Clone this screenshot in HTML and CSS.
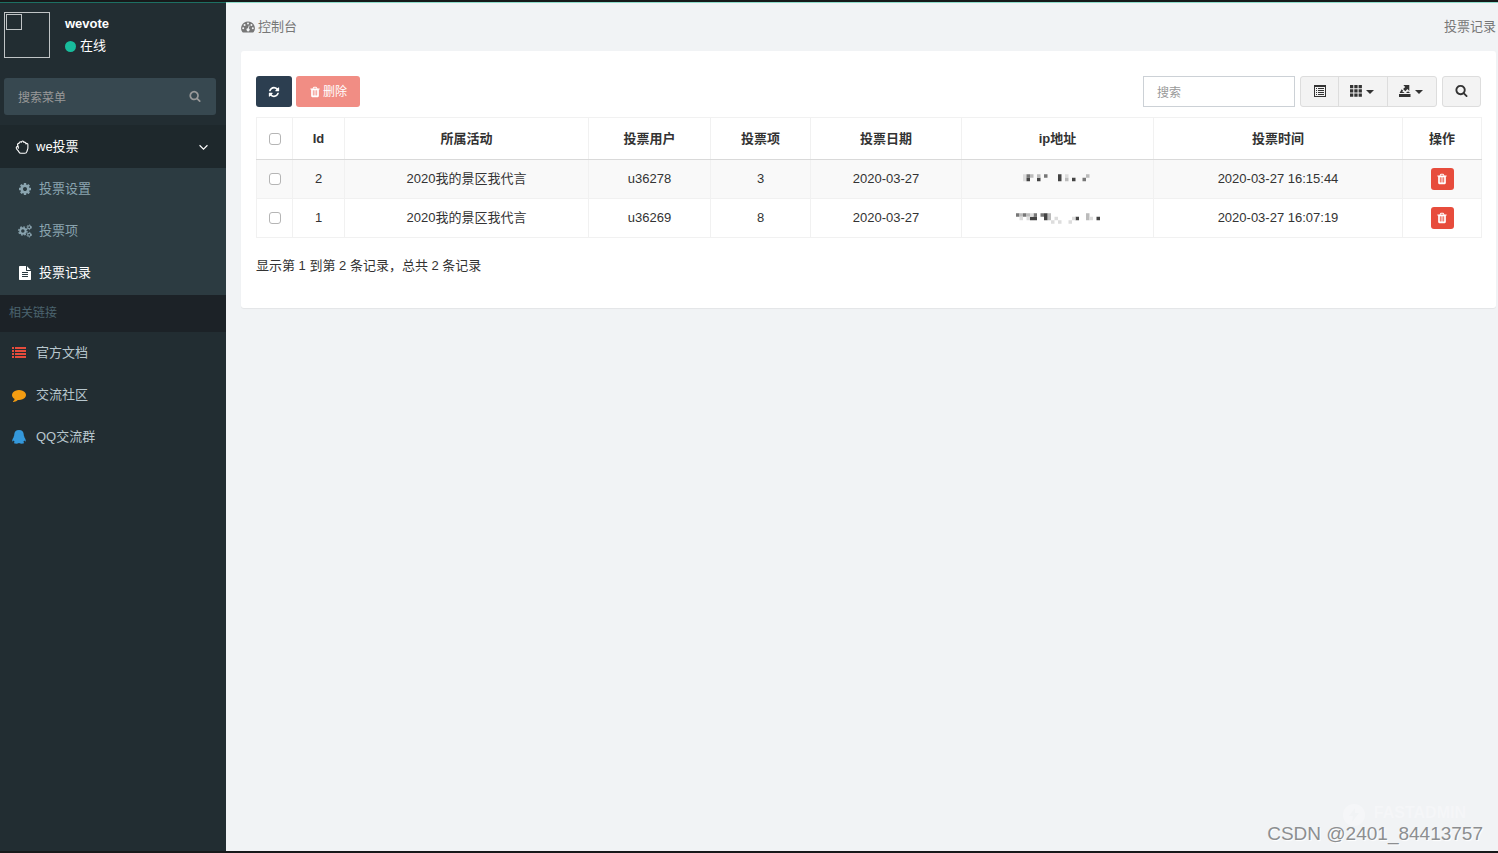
FILE: index.html
```html
<!DOCTYPE html>
<html lang="zh-CN">
<head>
<meta charset="utf-8">
<title>投票记录</title>
<link rel="stylesheet" href="styles.css">
</head>
<body>
<svg class="sprite" aria-hidden="true">
  <symbol id="search" viewBox="0 0 1792 1792"><path d="M1216 832q0-185-131.5-316.5t-316.5-131.5-316.5 131.5-131.5 316.5 131.5 316.5 316.5 131.5 316.5-131.5 131.5-316.5zm512 832q0 52-38 90t-90 38q-54 0-90-38l-343-342q-179 124-399 124-143 0-273.5-55.5t-225-150-150-225-55.5-273.5 55.5-273.5 150-225 225-150 273.5-55.5 273.5 55.5 225 150 150 225 55.5 273.5q0 220-124 399l343 343q37 37 37 90z"/></symbol>
  <symbol id="refresh" viewBox="0 0 1792 1792"><path d="M1639 1056q0 5-1 7-64 268-268 434.5t-478 166.5q-146 0-282.5-55t-243.5-157l-129 129q-19 19-45 19t-45-19-19-45v-448q0-26 19-45t45-19h448q26 0 45 19t19 45-19 45l-137 137q71 66 161 102t187 36q134 0 250-65t186-179q11-17 53-117 8-23 30-23h192q13 0 22.5 9.5t9.5 22.5zm25-800v448q0 26-19 45t-45 19h-448q-26 0-45-19t-19-45 19-45l138-138q-148-137-349-137-134 0-250 65t-186 179q-11 17-53 117-8 23-30 23h-199q-13 0-22.5-9.5t-9.5-22.5v-7q65-268 270-434.5t480-166.5q146 0 284 55.5t245 156.5l130-129q19-19 45-19t45 19 19 45z"/></symbol>
  <symbol id="trash" viewBox="0 0 1792 1792"><path d="M704 1376v-704q0-14-9-23t-23-9h-64q-14 0-23 9t-9 23v704q0 14 9 23t23 9h64q14 0 23-9t9-23zm256 0v-704q0-14-9-23t-23-9h-64q-14 0-23 9t-9 23v704q0 14 9 23t23 9h64q14 0 23-9t9-23zm256 0v-704q0-14-9-23t-23-9h-64q-14 0-23 9t-9 23v704q0 14 9 23t23 9h64q14 0 23-9t9-23zm-544-992h448l-48-117q-7-9-17-11h-317q-10 2-17 11zm928 32v64q0 14-9 23t-23 9h-96v948q0 83-47 143.5t-113 60.5h-832q-66 0-113-58.5t-47-141.5v-952h-96q-14 0-23-9t-9-23v-64q0-14 9-23t23-9h309l70-167q15-37 54-63t79-26h320q40 0 79 26t54 63l70 167h309q14 0 23 9t9 23z"/></symbol>
  <symbol id="cog" viewBox="0 0 1792 1792"><path d="M1152 896q0-106-75-181t-181-75-181 75-75 181 75 181 181 75 181-75 75-181zm512-109v222q0 12-8 23t-20 13l-185 28q-19 54-39 91 35 50 107 138 10 12 10 25t-9 23q-27 37-99 108t-94 71q-12 0-26-9l-138-108q-44 23-91 38-16 136-29 186-7 28-36 28h-222q-14 0-24.5-8.5t-11.5-21.5l-28-184q-49-16-90-37l-141 107q-10 9-25 9-14 0-25-11-126-114-165-168-7-10-7-23 0-12 8-23 15-21 51-66.5t54-70.5q-27-50-41-99l-183-27q-13-2-21-12.5t-8-23.5v-222q0-12 8-23t19-13l186-28q14-46 39-92-40-57-107-138-10-12-10-24 0-10 9-23 26-36 98.5-107.5t94.5-71.5q13 0 26 10l138 107q44-23 91-38 16-136 29-186 7-28 36-28h222q14 0 24.5 8.5t11.5 21.5l28 184q49 16 90 37l142-107q9-9 24-9 13 0 25 10 129 119 165 170 7 8 7 22 0 12-8 23-15 21-51 66.5t-54 70.5q26 50 41 98l183 28q13 2 21 12.5t8 23.5z"/></symbol>
  <symbol id="file" viewBox="0 0 1792 1792"><path d="M1596 476q14 14 28 36h-472v-472q22 14 36 28zm-476 164h544v1056q0 40-28 68t-68 28h-1344q-40 0-68-28t-28-68v-1600q0-40 28-68t68-28h800v544q0 40 28 68t68 28zm160 736v-64q0-14-9-23t-23-9h-704q-14 0-23 9t-9 23v64q0 14 9 23t23 9h704q14 0 23-9t9-23zm0-256v-64q0-14-9-23t-23-9h-704q-14 0-23 9t-9 23v64q0 14 9 23t23 9h704q14 0 23-9t9-23zm0-256v-64q0-14-9-23t-23-9h-704q-14 0-23 9t-9 23v64q0 14 9 23t23 9h704q14 0 23-9t9-23z"/></symbol>
  <symbol id="comment" viewBox="0 0 1792 1792"><path d="M1792 896q0 174-120 321.5t-326 233-450 85.5q-70 0-145-8-198 175-460 242-49 14-114 22-17 2-30.500-9t-17.500-29v-1q-3-4-.5-12t2-10 4.500-9.500l6-9 7-8.500 8-9q7-8 31-34.500t34.500-38 31-39.500 32.500-51 27-59 26-76q-157-89-247.500-220t-90.500-281q0-174 120-321.500t326-233 450-85.500 450 85.500 326 233 120 321.500z"/></symbol>
  <symbol id="cogs" viewBox="0 0 15 14"><g fill="none" stroke="currentColor"><circle cx="5.200" cy="7" r="2.900" stroke-width="2"/><circle cx="5.200" cy="7" r="4.400" stroke-width="1.500" stroke-dasharray="1.800 1.656"/><circle cx="12" cy="3" r="1.600" stroke-width="1.200"/><circle cx="12" cy="3" r="2.500" stroke-width="1" stroke-dasharray="1.300 1.318"/><circle cx="12" cy="11" r="1.600" stroke-width="1.200"/><circle cx="12" cy="11" r="2.500" stroke-width="1" stroke-dasharray="1.300 1.318"/></g></symbol>
  <symbol id="hand" viewBox="0 0 14 14"><path fill="none" stroke="currentColor" stroke-width="1.100" stroke-linejoin="round" stroke-linecap="round" d="M3.300 8.300V7C2.200 6 1 6.700 1.300 8.200 1.700 9.800 3.200 10.600 3.800 11.700Q4.500 13.300 6 13.300H9.800Q11.500 13.300 11.900 11.500L12.900 8.300V4.500C12.900 3.200 11.400 3.100 11 4 10.800 2 9.200 1.800 8.900 2.500 8.500.6 6.900.6 6.600 2.200 5.500 1.400 4 2 4 3.400 2.800 3.300 2.400 4.100 2.600 5L3.300 7"/></symbol>
  <symbol id="list" viewBox="0 0 14 12"><path d="M0 0h2v2H0zM3 0h11v2H3zM0 3h2v2H0zM3 3h11v2H3zM0 6h2v2H0zM3 6h11v2H3zM0 9h2v2H0zM3 9h11v2H3z"/></symbol>
  <symbol id="qq" viewBox="0 0 14 14"><path d="M7 0C10.200 0 11.700 2 11.700 4.300L11.900 5.700Q12.400 6.300 12.400 7.200 14 9.300 13.700 11.200 13.200 11.800 12.200 10.600 11.900 11.500 11.300 12 12.500 12.500 12 13.300 9.300 14.100 7 13 4.700 14.100 2 13.300 1.500 12.500 2.700 12 2.100 11.500 1.800 10.600.8 11.800.3 11.200 0 9.300 1.600 7.200 1.600 6.300 2.100 5.700L2.300 4.300C2.300 2 3.800 0 7 0Z"/></symbol>
  <symbol id="dash" viewBox="0 0 14 12"><path fill-rule="evenodd" d="M7 .5A6.800 6.800 0 0 0 1.300 11.100Q1.500 11.500 2 11.500H12Q12.500 11.500 12.700 11.100A6.800 6.800 0 0 0 7 .5ZM7 1.500a1 1 0 1 1 0 2 1 1 0 0 1 0-2ZM3.600 2.900a1 1 0 1 1 0 2 1 1 0 0 1 0-2ZM10.400 2.900a1 1 0 1 1 0 2 1 1 0 0 1 0-2ZM2.200 6.300a1 1 0 1 1 0 2 1 1 0 0 1 0-2ZM11.800 6.300a1 1 0 1 1 0 2 1 1 0 0 1 0-2ZM7.800 4.400 8.600 4.600 7.800 7.500A1.500 1.500 0 1 1 7 7.300Z"/></symbol>
  <symbol id="listalt" viewBox="0 0 12 12"><path fill-rule="evenodd" d="M0 0h12v12H0zM1 2v9h10V2zM2 3h1v1H2zM4 3h6v1H4zM2 5h1v1H2zM4 5h6v1H4zM2 7h1v1H2zM4 7h6v1H4zM2 9h1v1H2zM4 9h6v1H4z"/></symbol>
  <symbol id="grid" viewBox="0 0 12 12"><path d="M0 0h3.300v3.300H0zM4.300 0h3.300v3.300H4.300zM8.600 0h3.300v3.300H8.600zM0 4.200h3.300v3.300H0zM4.300 4.200h3.300v3.300H4.300zM8.600 4.200h3.300v3.300H8.600zM0 8.400h3.300v3.300H0zM4.300 8.400h3.300v3.300H4.300zM8.600 8.400h3.300v3.300H8.600z"/></symbol>
  <symbol id="export" viewBox="0 0 12 12"><path d="M4.300 0H10.300V6L8.400 4.100 6.300 6.200 4.100 4 6.200 1.900ZM2.600 4.200 4.200 5.800 3.200 7 5.200 7.300V8H.6ZM0 9h11.500v3H0zM7.500 7 9.500 6.500 11 8H7.500Z"/></symbol>
</svg>
<div class="app">
  <aside class="sidebar">
    <div class="user">
      <div class="avatar"><span class="avatar-mark"></span></div>
      <div class="user-info"><strong>wevote</strong><span class="status"><i class="dot"></i>在线</span></div>
    </div>
    <form class="menu-search">
      <input type="text" placeholder="搜索菜单" aria-label="搜索菜单">
      <button type="button" aria-label="搜索"><svg class="icon small"><use href="#search"/></svg></button>
    </form>
    <nav>
      <a class="item parent" href="#"><svg class="icon"><use href="#hand"/></svg>we投票<svg class="chevron" viewBox="0 0 8 6"><path d="M.5 1 4 4.500 7.500 1"/></svg></a>
      <div class="submenu">
        <a class="item" href="#"><svg class="icon"><use href="#cog"/></svg>投票设置</a>
        <a class="item" href="#"><svg class="icon"><use href="#cogs"/></svg>投票项</a>
        <a class="item current" href="#"><svg class="icon"><use href="#file"/></svg>投票记录</a>
      </div>
      <div class="menu-title">相关链接</div>
      <a class="item" href="#"><svg class="icon red"><use href="#list"/></svg>官方文档</a>
      <a class="item" href="#"><svg class="icon orange"><use href="#comment"/></svg>交流社区</a>
      <a class="item" href="#"><svg class="icon blue"><use href="#qq"/></svg>QQ交流群</a>
    </nav>
  </aside>
  <main>
    <header class="crumbs"><a href="#"><svg class="icon"><use href="#dash"/></svg>控制台</a><span>投票记录</span></header>
    <section class="panel">
      <div class="toolbar">
        <button class="btn refresh" type="button" aria-label="刷新"><svg class="icon small"><use href="#refresh"/></svg></button>
        <button class="btn delete" type="button"><svg class="icon small"><use href="#trash"/></svg>删除</button>
        <input class="table-search" type="text" placeholder="搜索" aria-label="搜索记录">
        <div class="group">
          <button type="button" aria-label="切换视图"><svg class="icon small"><use href="#listalt"/></svg></button>
          <button type="button" aria-label="列"><svg class="icon small"><use href="#grid"/></svg><i class="caret"></i></button>
          <button type="button" aria-label="导出"><svg class="icon small"><use href="#export"/></svg><i class="caret"></i></button>
        </div>
        <button class="btn plain" type="button" aria-label="高级搜索"><svg class="icon"><use href="#search"/></svg></button>
      </div>
      <table>
        <colgroup><col class="c-check"><col class="c-id"><col class="c-activity"><col class="c-user"><col class="c-option"><col class="c-date"><col class="c-ip"><col class="c-time"><col class="c-action"></colgroup>
        <thead><tr><th><input type="checkbox" aria-label="全选"></th><th>Id</th><th>所属活动</th><th>投票用户</th><th>投票项</th><th>投票日期</th><th>ip地址</th><th>投票时间</th><th>操作</th></tr></thead>
        <tbody>
          <tr><td><input type="checkbox" aria-label="选择 2"></td><td>2</td><td>2020我的景区我代言</td><td>u36278</td><td>3</td><td>2020-03-27</td>
            <td><svg class="mosaic" viewBox="0 0 24 3"><g transform="translate(2 0)"><path fill="#ddd" d="M0 0h1v2H0zM12 0h1v1h-1z"/><path fill="#777" d="M1 0h1v1H1zM6 0h1v1H6zM17 1h1v1h-1z"/><path fill="#444" d="M1 1h1v1H1zM4 1h1v1H4zM10 0h1v2h-1zM14 1h1v1h-1z"/><path fill="#bbb" d="M2 0h1v1H2zM4 0h1v1H4zM12 1h1v1h-1zM18 0h1v1h-1z"/></g></svg></td>
            <td>2020-03-27 16:15:44</td><td><button class="row-delete" type="button" aria-label="删除 2"><svg class="icon small"><use href="#trash"/></svg></button></td></tr>
          <tr><td><input type="checkbox" aria-label="选择 1"></td><td>1</td><td>2020我的景区我代言</td><td>u36269</td><td>8</td><td>2020-03-27</td>
            <td><svg class="mosaic" viewBox="0 0 24 3"><path fill="#777" d="M0 0h1v1H0zM2 0h1v1H2zM5 0h1v1H5zM7 0h1v1H7z"/><path fill="#bbb" d="M1 0h1v1H1zM3 0h1v1H3zM9 0h1v2H9zM20 0h1v2h-1z"/><path fill="#444" d="M4 1h2v1H4zM8 0h1v2H8zM17 1h1v1h-1zM23 1h1v1h-1z"/><path fill="#ddd" d="M1 1h1v1H1zM3 1h1v1H3zM4 0h1v1H4zM10 2h1v1h-1zM11 1h1v1h-1zM12 2h1v1h-1zM15 2h1v1h-1zM16 1h1v1h-1zM21 1h1v1h-1z"/></svg></td>
            <td>2020-03-27 16:07:19</td><td><button class="row-delete" type="button" aria-label="删除 1"><svg class="icon small"><use href="#trash"/></svg></button></td></tr>
        </tbody>
      </table>
      <p class="summary">显示第 1 到第 2 条记录，总共 2 条记录</p>
    </section>
  </main>
</div>
<div class="brand"><svg viewBox="0 0 22 22"><path fill-rule="evenodd" d="M11 0a11 11 0 1 0 0 22 11 11 0 0 0 0-22ZM12 4 6 12h4l-1 6 7-9h-4Z"/></svg>FASTADMIN</div>
<div class="watermark">CSDN @2401_84413757</div>
</body>
</html>
```
FILE: styles.css
```css
* { box-sizing: border-box; }
body {
  margin: 0;
  color: #333;
  background: #f1f3f5;
  font: 13px/20px "Liberation Sans", "Noto Sans CJK SC", sans-serif;
}
input, button { font: inherit; }
button { cursor: pointer; }
a { color: inherit; text-decoration: none; }
.sprite { position: absolute; width: 0; height: 0; }
.icon { width: 14px; height: 14px; fill: currentColor; flex: none; }
.icon.small { width: 12px; height: 12px; }
.red { color: #e74c3c; }
.orange { color: #f39c12; }
.blue { color: #3498db; }

.app {
  display: flex;
  min-height: 100vh;
  border-top: 2px solid #17191a;
  border-bottom: 2px solid #17191a;
}
.sidebar {
  width: 226px;
  flex: none;
  color: #b8c7ce;
  background: #222d32;
  border-top: 1px solid #1d6f62;
}
.user { display: flex; gap: 15px; padding: 9px 4px 0; }
.avatar { width: 46px; height: 46px; border: 1px solid #c0c4c6; padding: 1px; }
.avatar-mark { display: block; width: 16px; height: 16px; border: 1px solid #c0c4c6; }
.user-info { display: flex; flex-direction: column; gap: 2px; padding-top: 2px; color: #fff; }
.status { display: flex; align-items: center; gap: 4px; }
.dot { width: 11px; height: 11px; border-radius: 50%; background: #18bc9c; }
.menu-search {
  display: flex;
  height: 37px;
  margin: 20px 10px 10px 4px;
  background: #374850;
  border-radius: 3px;
}
.menu-search input {
  flex: 1;
  min-width: 0;
  padding: 2px 14px 0;
  border: 0;
  color: #fff;
  background: none;
  font-size: 12px;
}
.menu-search button { width: 42px; padding: 3px 0 0; border: 0; color: #999; background: none; }
::placeholder { color: #999; opacity: 1; }
.item { display: flex; align-items: center; gap: 10px; height: 42px; padding: 0 18px 0 12px; }
.parent { gap: 7px; padding-left: 15px; height: 43px; color: #fff; background: #1e282c; }
.chevron { width: 9px; height: 7px; margin: 2px 0 0 auto; fill: none; stroke: #fff; }
.submenu { padding-bottom: 1px; background: #2c3b41; color: #8aa4af; }
.submenu .item { gap: 7px; padding-left: 18px; }
.submenu .current { color: #fff; }
.menu-title { padding: 8px 9px; color: #4b646f; background: #1c2227; font-size: 12px; line-height: 21px; }

main { flex: 1; min-width: 0; padding: 0 2px 0 15px; border-top: 1px solid #8fdccb; }
.crumbs { display: flex; justify-content: space-between; padding: 14px 0; color: #777; }
.crumbs a { display: flex; align-items: center; gap: 3px; }
.panel { padding: 25px 15px 32px; background: #fff; border-radius: 3px; box-shadow: 0 1px 1px rgba(0, 0, 0, .06); }
.toolbar { display: flex; gap: 5px; height: 31px; margin-bottom: 10px; }
.btn { display: flex; align-items: center; justify-content: center; gap: 2px; padding: 0 12px; border: 0; border-radius: 3px; font-size: 12px; }
.refresh { width: 36px; color: #fff; background: #2c3e50; }
.delete { width: 64px; margin-left: -1px; color: #fff; background: #f18d84; }
.table-search { width: 152px; margin-left: auto; padding: 2px 13px 0; border: 1px solid #ccd1d6; font-size: 12px; }
.group { display: flex; border: 1px solid #ddd; border-radius: 3px; background: #f3f3f3; }
.group button { display: flex; align-items: center; gap: 4px; width: 49px; padding: 0 11px 2px; border: 0; background: none; color: #333; }
.group button:first-child { width: 37px; padding: 0 12px 2px 13px; }
.group button + button { border-left: 1px solid #ddd; }
.caret { margin-top: 3px; border: 4px solid transparent; border-top-color: currentColor; border-bottom: 0; }
.plain { width: 39px; padding-bottom: 2px; border: 1px solid #ddd; background: #f3f3f3; color: #333; }
.plain .icon { width: 13px; height: 13px; }

table { width: 100%; table-layout: fixed; border-collapse: collapse; text-align: center; }
.c-check { width: 36px; }
.c-id { width: 52px; }
.c-activity { width: 244px; }
.c-user { width: 122px; }
.c-option { width: 100px; }
.c-date { width: 151px; }
.c-ip { width: 192px; }
.c-time { width: 249px; }
.c-action { width: 79px; }
th, td { height: 39px; padding: 0; border: 1px solid #f1f1f1; }
th { height: 42px; border-bottom-color: #d9d9d9; }
tbody tr:nth-child(odd) { background: #f9f9f9; }
td input, th input {
  display: block;
  width: 12px;
  height: 12px;
  margin: 0 auto;
  appearance: none;
  border: 1px solid #b5b5b5;
  border-radius: 3px;
  background: #fff;
}
.row-delete { display: flex; align-items: center; justify-content: center; width: 23px; height: 22px; margin: 0 auto; padding: 0; border: 0; border-radius: 3px; color: #fff; background: #e74c3c; }
.mosaic { display: block; width: 84px; height: 11px; margin: 0 auto; }
.summary { margin: 18px 0 0; }

.brand { position: absolute; right: 32px; bottom: 27px; display: flex; align-items: flex-start; gap: 9px; color: #f5f6f8; font-size: 16px; line-height: 18px; font-weight: bold; }
.brand svg { width: 22px; height: 22px; fill: currentColor; }
.watermark { position: absolute; right: 15px; bottom: 8px; color: #8c8e90; font-size: 19px; line-height: 22px; text-shadow: 1px 1px 1px #fff; }
```
